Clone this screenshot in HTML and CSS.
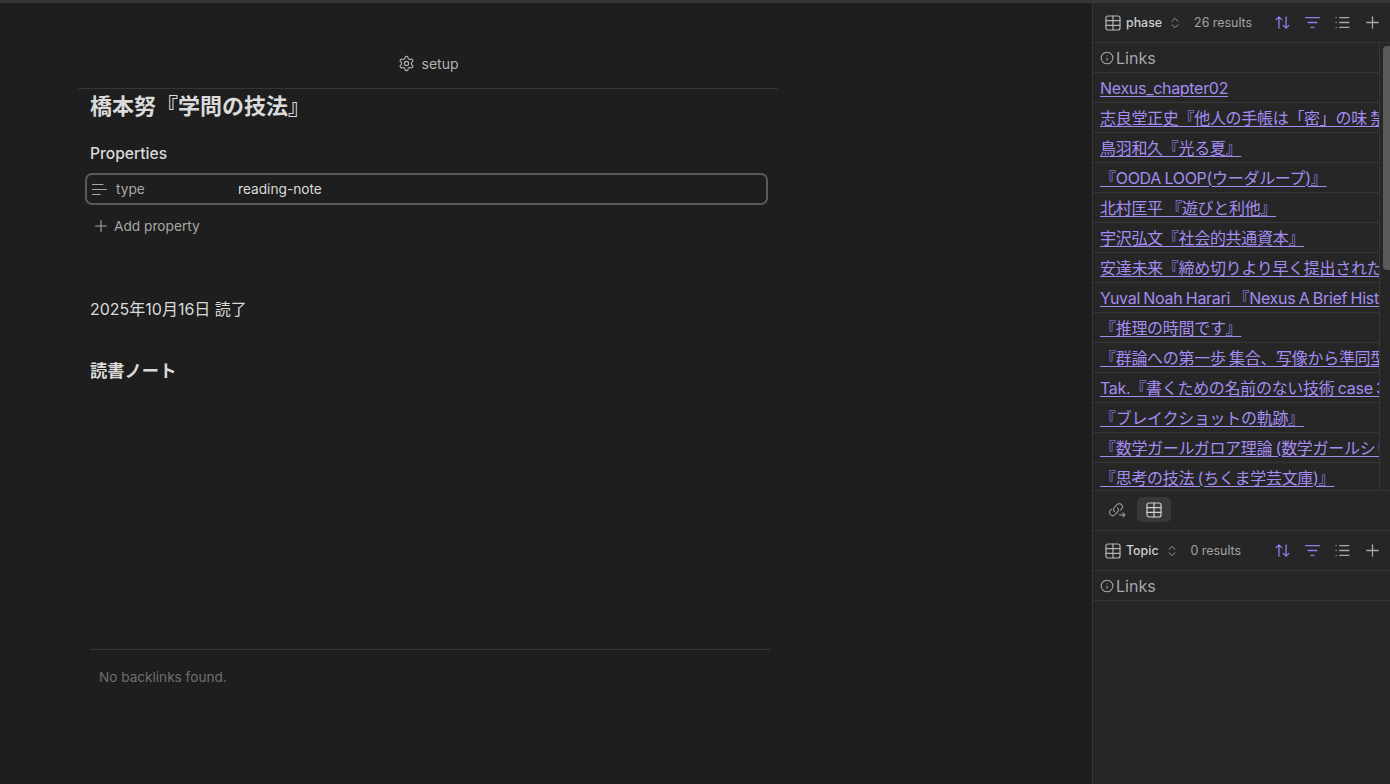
FILE: index.html
```html
<!DOCTYPE html>
<html lang="ja">
<head>
<meta charset="utf-8">
<title>学問の技法</title>
<link rel="stylesheet" href="styles.css">
</head>
<body>
<svg class="defs" width="0" height="0" aria-hidden="true">
  <symbol id="i-table" viewBox="0 0 16 16"><rect x="1" y="1" width="14" height="14" rx="2"/><path d="M1 5.7h14M1 10.3h14M8 1v14"/></symbol>
  <symbol id="i-updown" viewBox="0 0 24 24"><path d="m7 15 5 5 5-5M7 9l5-5 5 5"/></symbol>
  <symbol id="i-sort" viewBox="0 0 24 24"><path d="m21 16-4 4-4-4M17 20V4M3 8l4-4 4 4M7 4v16"/></symbol>
  <symbol id="i-filter" viewBox="0 0 24 24"><path d="M2 5h20M6 12h12M10 19h4"/></symbol>
  <symbol id="i-list" viewBox="0 0 24 24"><path d="M3 5h.01M3 12h.01M3 19h.01M8 5h13M8 12h13M8 19h13"/></symbol>
  <symbol id="i-plus" viewBox="0 0 24 24"><path d="M4 12h16M12 4v16"/></symbol>
  <symbol id="i-info" viewBox="0 0 24 24"><circle cx="12" cy="12" r="10"/><path d="M12 16v-4M12 8h.01"/></symbol>
</svg>
<div class="topbar"></div>
<div class="app">
  <main class="note">
    <div class="note-inner">
      <header class="note-header">
        <svg class="ic ic-gear" viewBox="0 0 24 24"><path d="M12.22 2h-.44a2 2 0 0 0-2 2v.18a2 2 0 0 1-1 1.73l-.43.25a2 2 0 0 1-2 0l-.15-.08a2 2 0 0 0-2.73.73l-.22.38a2 2 0 0 0 .73 2.73l.15.1a2 2 0 0 1 1 1.72v.51a2 2 0 0 1-1 1.74l-.15.09a2 2 0 0 0-.73 2.73l.22.38a2 2 0 0 0 2.73.73l.15-.08a2 2 0 0 1 2 0l.43.25a2 2 0 0 1 1 1.73V20a2 2 0 0 0 2 2h.44a2 2 0 0 0 2-2v-.18a2 2 0 0 1 1-1.73l.43-.25a2 2 0 0 1 2 0l.15.08a2 2 0 0 0 2.73-.73l.22-.39a2 2 0 0 0-.73-2.73l-.15-.08a2 2 0 0 1-1-1.74v-.5a2 2 0 0 1 1-1.74l.15-.09a2 2 0 0 0 .73-2.73l-.22-.38a2 2 0 0 0-2.73-.73l-.15.08a2 2 0 0 1-2 0l-.43-.25a2 2 0 0 1-1-1.73V4a2 2 0 0 0-2-2z"/><circle cx="12" cy="12" r="3"/></svg>
        <span>setup</span>
      </header>
      <h1 class="title">橋本努『学問の技法』</h1>
      <div class="props-heading">Properties</div>
      <div class="prop-row">
        <svg class="ic ic-type" viewBox="0 0 24 24"><path d="M2 5h15M2 12h20M2 19h11"/></svg>
        <span class="prop-key">type</span>
        <span class="prop-value">reading-note</span>
      </div>
      <div class="add-prop">
        <svg class="ic ic-add"><use href="#i-plus"/></svg>
        <span>Add property</span>
      </div>
      <p class="para">2025年10月16日 読了</p>
      <h2 class="h2">読書ノート</h2>
      <section class="backlinks">No backlinks found.</section>
    </div>
  </main>
  <aside class="side">
    <section class="pane pane-top">
      <div class="toolbar">
        <svg class="ic ic-table"><use href="#i-table"/></svg>
        <span class="view-name">phase</span>
        <svg class="ic ic-updown"><use href="#i-updown"/></svg>
        <span class="count">26 results</span>
        <span class="tools">
          <svg class="ic ic-tool accent"><use href="#i-sort"/></svg>
          <svg class="ic ic-tool accent"><use href="#i-filter"/></svg>
          <svg class="ic ic-tool"><use href="#i-list"/></svg>
          <svg class="ic ic-tool"><use href="#i-plus"/></svg>
        </span>
      </div>
      <div class="table-wrap">
        <div class="cell head"><svg class="ic ic-info"><use href="#i-info"/></svg>Links</div>
        <div class="cell"><a href="#">Nexus_chapter02</a></div>
        <div class="cell"><a href="#">志良堂正史『他人の手帳は「密」の味 禁断の手帳鑑賞』</a></div>
        <div class="cell"><a href="#">鳥羽和久『光る夏』</a></div>
        <div class="cell"><a href="#">『OODA LOOP(ウーダループ)』</a></div>
        <div class="cell"><a href="#">北村匡平 『遊びと利他』</a></div>
        <div class="cell"><a href="#">宇沢弘文『社会的共通資本』</a></div>
        <div class="cell"><a href="#">安達未来『締め切りより早く提出されたレポートはなぜ』</a></div>
        <div class="cell"><a href="#">Yuval Noah Harari 『Nexus A Brief History of Information』</a></div>
        <div class="cell"><a href="#">『推理の時間です』</a></div>
        <div class="cell"><a href="#">『群論への第一歩 集合、写像から準同型定理まで』</a></div>
        <div class="cell"><a href="#">Tak.『書くための名前のない技術 case 3』</a></div>
        <div class="cell"><a href="#">『ブレイクショットの軌跡』</a></div>
        <div class="cell"><a href="#">『数学ガールガロア理論 (数学ガールシリーズ5)』</a></div>
        <div class="cell"><a href="#">『思考の技法 (ちくま学芸文庫)』</a></div>
        <div class="scrollbar"></div>
      </div>
    </section>
    <div class="tabs">
      <span class="tab">
        <svg class="ic ic-link" viewBox="0 0 18 16"><path d="M6.500 9.500a3 3 0 0 1 0-4.200l2.700-2.900a3.200 3.200 0 0 1 4.500 4.500l-1.300 1.300"/><path d="M9.500 5.800a3 3 0 0 1 0 4.200l-2.700 2.900a3.200 3.200 0 0 1-4.500-4.500l1.300-1.300"/><path d="M11.500 12.800h5.500M15 10.800l2 2-2 2"/></svg>
      </span>
      <span class="tab active"><svg class="ic ic-tab"><use href="#i-table"/></svg></span>
    </div>
    <section class="pane pane-bottom">
      <div class="toolbar">
        <svg class="ic ic-table"><use href="#i-table"/></svg>
        <span class="view-name">Topic</span>
        <svg class="ic ic-updown"><use href="#i-updown"/></svg>
        <span class="count">0 results</span>
        <span class="tools">
          <svg class="ic ic-tool accent"><use href="#i-sort"/></svg>
          <svg class="ic ic-tool accent"><use href="#i-filter"/></svg>
          <svg class="ic ic-tool"><use href="#i-list"/></svg>
          <svg class="ic ic-tool"><use href="#i-plus"/></svg>
        </span>
      </div>
      <div class="cell head full"><svg class="ic ic-info"><use href="#i-info"/></svg>Links</div>
    </section>
  </aside>
</div>
</body>
</html>
```
FILE: styles.css
```css
* { box-sizing: border-box; }
html, body { margin: 0; height: 100%; overflow: hidden; }
body {
  background: #1e1e1e;
  color: #dadada;
  font-family: Inter, "Noto Sans CJK JP", sans-serif;
  display: flex;
  flex-direction: column;
  height: 784px;
}
.defs { position: absolute; }
.topbar { height: 3px; background: #363636; flex: none; }
.app { flex: 1; display: flex; min-height: 0; }

.ic { fill: none; stroke: currentColor; stroke-width: 2; stroke-linecap: round; stroke-linejoin: round; flex: none; }

/* note */
.note { width: 1092px; flex: none; padding-left: 78px; }
.note-inner { width: 700px; }
.note-header {
  height: 86px;
  padding-bottom: 14px;
  border-bottom: 1px solid #363636;
  display: flex;
  justify-content: center;
  align-items: flex-end;
  gap: 7px;
  color: #b3b3b3;
  font-size: 14px;
  line-height: 20px;
}
.ic-gear { width: 17px; height: 17px; stroke-width: 1.6; margin-bottom: 2px; }
.title {
  margin: -1px 0 0;
  padding-left: 12px;
  font-size: 22px;
  line-height: 36px;
  font-weight: 700;
  color: #dadada;
}
.props-heading {
  margin-top: 18px;
  padding-left: 12px;
  font-size: 15.600px;
  line-height: 24px;
  font-weight: 500;
  color: #dadada;
}
.prop-row {
  margin: 7px 0 0 7px;
  width: 683px;
  height: 32px;
  border: 2px solid #5a5a5a;
  border-radius: 7px;
  display: flex;
  align-items: center;
  padding-left: 4px;
  font-size: 13.700px;
  line-height: 20px;
}
.ic-type { width: 17px; height: 17px; color: #a8a8a8; stroke-width: 1.5; }
.prop-key { width: 122px; margin-left: 8px; color: #a8a8a8; }
.prop-value { color: #dadada; }
.add-prop {
  margin: 10px 0 0 15px;
  height: 22px;
  display: flex;
  align-items: center;
  gap: 5px;
  font-size: 13.700px;
  color: #a8a8a8;
}
.ic-add { width: 16px; height: 16px; stroke-width: 1.7; }
.para {
  margin: 60px 0 0;
  padding-left: 12px;
  font-size: 16px;
  line-height: 24px;
  color: #dadada;
}
.h2 {
  margin: 36px 0 0;
  padding-left: 12px;
  font-size: 17.300px;
  line-height: 28px;
  font-weight: 700;
  color: #dadada;
}
.backlinks {
  margin: 264px 0 0 12px;
  width: 680px;
  border-top: 1px solid #363636;
  padding: 17px 0 0 9px;
  font-size: 13.600px;
  line-height: 20px;
  color: #6f6f6f;
}

/* sidebar */
.side {
  width: 298px;
  flex: none;
  background: #262626;
  border-left: 1px solid #363636;
  display: flex;
  flex-direction: column;
}
.pane-top { height: 488px; display: flex; flex-direction: column; border-bottom: 1px solid #363636; flex: none; }
.toolbar {
  height: 40px;
  flex: none;
  border-bottom: 1px solid #363636;
  display: flex;
  align-items: center;
  padding-left: 12px;
  color: #b3b3b3;
  font-size: 12.400px;
}
.ic-table { width: 16px; height: 16px; stroke-width: 1.2; }
.view-name { margin-left: 5px; font-weight: 500; color: #cfcfcf; }
.ic-updown { width: 14px; height: 14px; margin-left: 6px; stroke-width: 1.7; color: #9a9a9a; }
.count { margin-left: 12px; color: #a3a3a3; }
.tools { margin-left: auto; display: flex; gap: 13px; padding-right: 9px; }
.ic-tool { width: 17px; height: 17px; stroke-width: 1.8; color: #a8a8a8; }
.accent { color: #937cf0; }
.table-wrap { flex: 1; position: relative; overflow: hidden; }
.cell {
  height: 30px;
  width: 287px;
  flex: none;
  border-bottom: 1px solid #363636;
  border-right: 1px solid #363636;
  padding-left: 7px;
  display: flex;
  align-items: center;
  font-size: 16px;
  line-height: 24px;
  white-space: nowrap;
  overflow: hidden;
}
.cell a { color: #a48cf2; text-decoration: underline; text-underline-offset: 2px; text-decoration-thickness: 1px; letter-spacing: -0.3px; word-spacing: -0.8px; }
.head { color: #a8a8a8; }
.head.full { width: 100%; border-right: 0; }
.ic-info { width: 14px; height: 14px; margin-right: 2px; stroke-width: 1.8; }
.scrollbar {
  position: absolute;
  right: 0;
  top: 3px;
  width: 7px;
  height: 224px;
  border-radius: 4px 0 0 4px;
  background: #5a5a5a;
}
.tabs {
  height: 40px;
  flex: none;
  border-bottom: 1px solid #363636;
  display: flex;
  align-items: center;
  gap: 3px;
  padding: 0 0 2px 7px;
}
.tab { width: 34px; height: 25px; display: flex; align-items: center; justify-content: center; border-radius: 5px; color: #8f8f8f; }
.tab.active { background: #383838; color: #cfcfcf; }
.ic-link { width: 18px; height: 16px; stroke-width: 1.2; }
.ic-tab { width: 16px; height: 16px; stroke-width: 1.2; }
.pane-bottom { flex: 1; }
```
